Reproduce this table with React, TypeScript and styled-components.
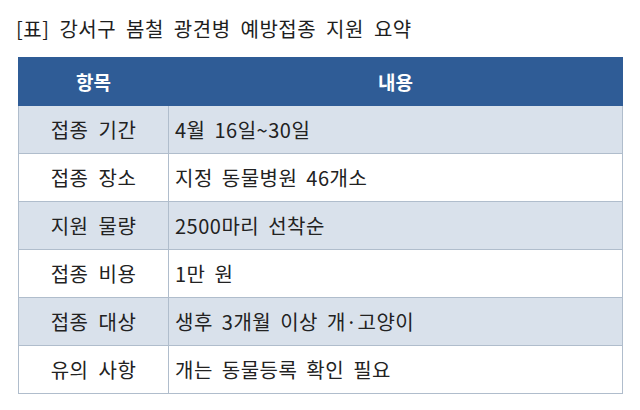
import styled, { createGlobalStyle } from 'styled-components';

const GlobalStyle = createGlobalStyle`
  body {
    margin: 0;
    background: #ffffff;
    font-family: 'Noto Sans CJK KR', 'Noto Sans', sans-serif;
    color: #222222;
  }
`;

const Page = styled.div`
  padding: 16px 0 0 16px;
`;

const Title = styled.h2`
  margin: 0;
  font-size: 20px;
  font-weight: 400;
  line-height: 26px;
  color: #1e1e1e;
  letter-spacing: 0.5px;
  word-spacing: 5px;
`;

const Table = styled.table`
  margin: 15px 0 0 2px;
  width: 605px;
  border-collapse: collapse;
  font-size: 20px;
`;

const HeadCell = styled.th<{ $wide?: boolean }>`
  height: 47px;
  padding: 0;
  width: ${p => (p.$wide ? 'auto' : '149px')};
  background: #2f5c96;
  color: #ffffff;
  font-weight: 700;
  font-size: 19px;
  text-align: center;
  border: 1px solid #2f5c96;
`;

const Row = styled.tr<{ $shaded: boolean }>`
  background: ${p => (p.$shaded ? '#d9e1eb' : '#ffffff')};
`;

const LabelCell = styled.td`
  height: 47px;
  padding: 0;
  text-align: center;
  border: 1px solid #b0bdcc;
  letter-spacing: 0.5px;
  word-spacing: 5px;
`;

const ValueCell = styled.td`
  height: 47px;
  padding: 0 0 0 6px;
  text-align: left;
  border: 1px solid #b0bdcc;
  letter-spacing: 0.5px;
  word-spacing: 4px;
`;

const rows = [
  ['접종 기간', '4월 16일~30일'],
  ['접종 장소', '지정 동물병원 46개소'],
  ['지원 물량', '2500마리 선착순'],
  ['접종 비용', '1만 원'],
  ['접종 대상', '생후 3개월 이상 개·고양이'],
  ['유의 사항', '개는 동물등록 확인 필요'],
];

export default function App() {
  return (
    <>
      <GlobalStyle />
      <Page>
        <Title>[표] 강서구 봄철 광견병 예방접종 지원 요약</Title>
        <Table>
          <thead>
            <tr>
              <HeadCell>항목</HeadCell>
              <HeadCell $wide>내용</HeadCell>
            </tr>
          </thead>
          <tbody>
            {rows.map((r, i) => (
              <Row key={i} $shaded={i % 2 === 0}>
                <LabelCell>{r[0]}</LabelCell>
                <ValueCell>{r[1]}</ValueCell>
              </Row>
            ))}
          </tbody>
        </Table>
      </Page>
    </>
  );
}
